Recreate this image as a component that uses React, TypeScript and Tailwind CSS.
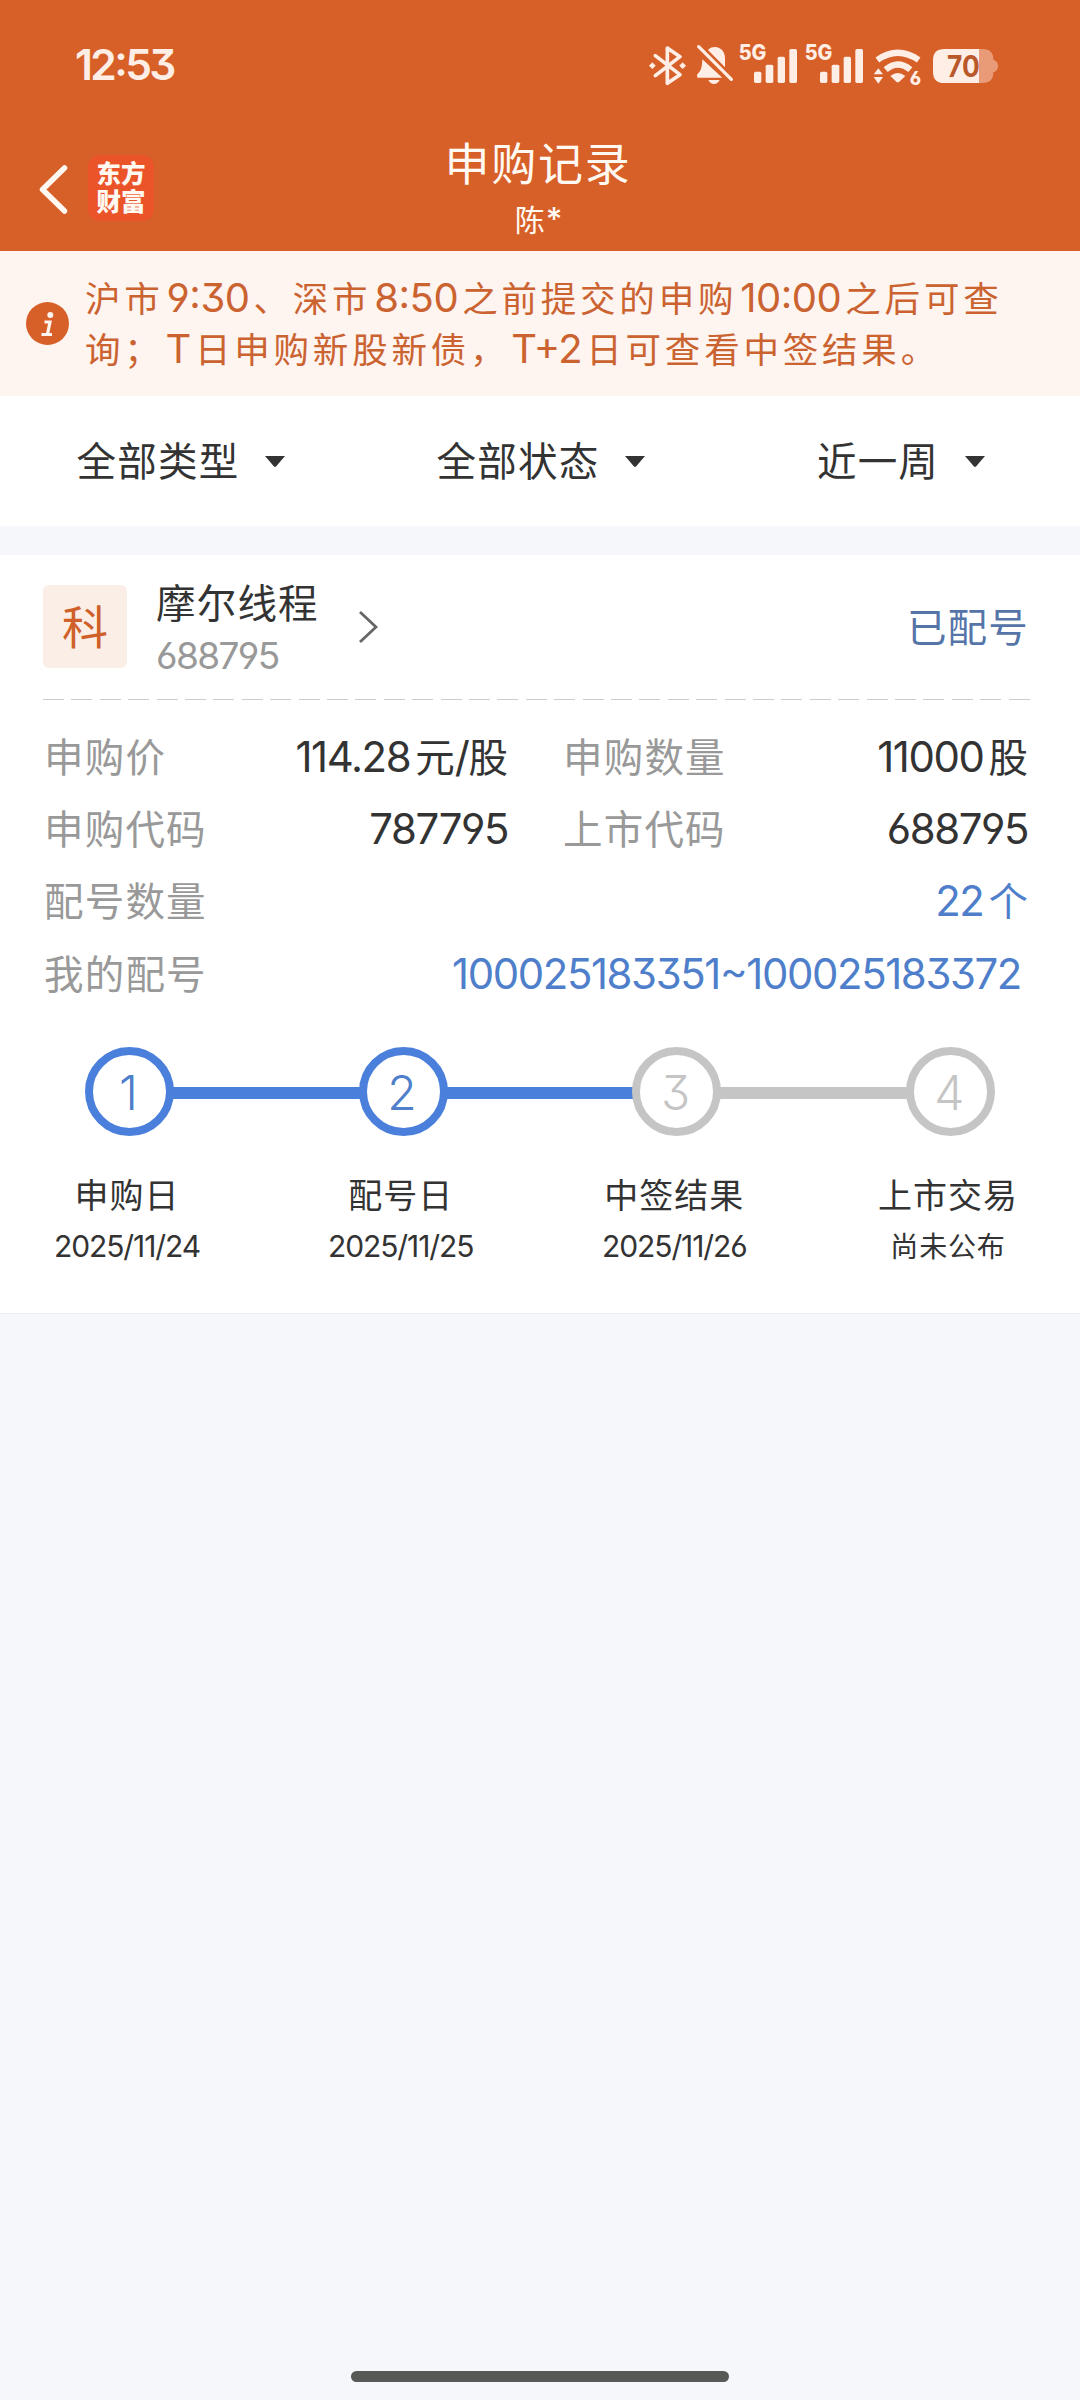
import React from "react";

const CJK = "font-['Noto_Sans_CJK_SC','Liberation_Sans',sans-serif]";
const LATIN =
  "font-['Inter','Noto_Sans_CJK_SC',sans-serif] leading-[0] [font-feature-settings:'cv03','cv04','cv09','calt']";

/** Splits mixed text so digits and letters use the Latin face, set off from the ideographs by a small gap. */
function Mixed({
  text,
  latin = "text-[1.06em] tracking-[-0.033em]",
  before = "ml-[5px]",
  after = "mr-[5px]",
}: {
  text: string;
  latin?: string;
  before?: string;
  after?: string;
}) {
  const parts = text.split(/([\x21-\x7e]+)/).filter(Boolean);
  return (
    <>
      {parts.map((p, i) =>
        /^[\x21-\x7e]/.test(p) ? (
          <span
            key={i}
            className={`${LATIN} ${latin} ${i > 0 && p !== "/" ? before : ""} ${i < parts.length - 1 && p !== "/" ? after : ""}`}
          >
            {p}
          </span>
        ) : (
          <span key={i}>{p}</span>
        )
      )}
    </>
  );
}

function BluetoothIcon() {
  return (
    <svg className="h-12 w-[37px]" viewBox="87 60 111 144" fill="none">
      <path d="M106 104L180 161L142 187V81L180 107L106 164" stroke="#FEEEE6" strokeWidth="11" strokeLinejoin="round" strokeLinecap="round" />
      <path d="M97 125l9 9-9 9-9-9zM188 125l9 9-9 9-9-9z" fill="#FEEEE6" stroke="#FEEEE6" strokeWidth="2" strokeLinejoin="round" />
    </svg>
  );
}

function MutedBellIcon() {
  return (
    <svg className="ml-[10px] h-12 w-[38px]" viewBox="228 60 114 144">
      <path d="M264 87C270 80 278 78 285 78C303 79 315 92 315 112V139Z" fill="#FEEEE6" />
      <path d="M247 115L307 170H233Q229 165 232 160C242 150 246 142 247 115Z" fill="#FEEEE6" />
      <path d="M265 177H299C295 185 289 189 282 189C275 189 269 185 265 177Z" fill="#FEEEE6" />
      <path d="M236 77L334 175" stroke="#FEEEE6" strokeWidth="10" strokeLinecap="round" />
    </svg>
  );
}

function SignalIcon({ className }: { className: string }) {
  return (
    <svg className={`h-12 w-[60px] ${className}`} viewBox="354 60 180 144" fill="#FEEEE6">
      <text x="356" y="118" fontSize="63" fontWeight="800" fontFamily="Inter, sans-serif" textLength="83" lengthAdjust="spacingAndGlyphs">
        5G
      </text>
      <rect x="402" y="152" width="22" height="34" rx="5" />
      <rect x="437" y="131" width="23" height="55" rx="5" />
      <rect x="473" y="107" width="22" height="79" rx="5" />
      <rect x="508" y="84" width="23" height="102" rx="5" />
    </svg>
  );
}

function WifiIcon() {
  return (
    <svg className="ml-[9px] h-12 w-[49px]" viewBox="759 60 147 144" fill="#FEEEE6">
      <g fill="none" stroke="#FEEEE6" strokeWidth="19">
        <path d="M772 117Q833 74 896 117" />
        <path d="M797 146Q833 115 871 146" />
      </g>
      <path d="M811 165Q833 147 856 165L838 182Q833 186 829 182Z" />
      <path d="M775 142L789 160H761Z M761 168H789L775 188Z" />
      <text
        className="[font-feature-settings:'cv03']"
        x="869"
        y="191"
        fontSize="55"
        fontWeight="800"
        fontFamily="Inter, sans-serif"
        textLength="34"
        lengthAdjust="spacingAndGlyphs"
      >
        6
      </text>
    </svg>
  );
}

function BatteryIcon() {
  return (
    <svg className="ml-[11px] h-12 w-[66px]" viewBox="939 60 198 144">
      <path d="M1077 84H1088Q1120 84 1120 116Q1134 120 1134 135Q1134 150 1120 154Q1120 186 1088 186H1077Z" fill="#E99B78" />
      <path d="M1077 84H973Q939 84 939 118V152Q939 186 973 186H1077Z" fill="#FEEEE6" />
      <text x="981" y="167" fontSize="88" fontWeight="700" fontFamily="Inter, sans-serif" fill="#B9592B" textLength="98" lengthAdjust="spacingAndGlyphs">
        70
      </text>
    </svg>
  );
}

function Filter({ label }: { label: string }) {
  return (
    <div className="flex items-center justify-center pl-[2px]">
      <span className="-mt-[5px] text-[39.5px] leading-[48px] tracking-[1.2px]">{label}</span>
      <svg className="ml-[26px] h-[11px] w-5" viewBox="0 0 20 11">
        <path d="M0 0H20L11 10.5Q10 11.4 9 10.5Z" fill="#333" />
      </svg>
    </div>
  );
}

function Field({ label, value, valueClass = "text-[#333]" }: { label: string; value: string; valueClass?: string }) {
  return (
    <div className="flex items-center justify-between">
      <span className="text-[39.5px] leading-[48px] tracking-[1.2px] text-[#999]">{label}</span>
      <span className={`text-[39.5px] leading-[48px] ${valueClass}`}>
        <Mixed text={value} />
      </span>
    </div>
  );
}

const steps = [
  { n: "1", title: "申购日", date: "2025/11/24", done: true },
  { n: "2", title: "配号日", date: "2025/11/25", done: true },
  { n: "3", title: "中签结果", date: "2025/11/26", done: false },
  { n: "4", title: "上市交易", date: "尚未公布", done: false },
];

export default function App() {
  return (
    <div className={`flex h-[2400px] w-[1080px] flex-col bg-[#F6F7FA] text-[#333] ${CJK}`}>
      <header className="h-[251px] shrink-0 bg-[#D75F28]">
        <div className="flex h-[130px] items-center justify-between pr-[81px] pl-[75px]">
          <span className={`text-[42.5px] font-semibold tracking-[-2.600px] text-[#FEEEE6] ${LATIN}`}>12:53</span>
          <div className="flex items-center">
            <BluetoothIcon />
            <MutedBellIcon />
            <SignalIcon className="ml-1" />
            <SignalIcon className="ml-[6px]" />
            <WifiIcon />
            <BatteryIcon />
          </div>
        </div>
        <div className="grid h-[121px] grid-cols-[1fr_auto_1fr] text-[#FFF9F2]">
          <div className="flex items-start pt-[25px] pl-[38px]">
            <svg className="mt-[9px] h-[52px] w-8" viewBox="0 0 32 52" fill="none">
              <path d="M26.5 4L4.500 25.500L26.5 47" stroke="#FFF9F2" strokeWidth="5.500" strokeLinecap="round" strokeLinejoin="round" />
            </svg>
            <div className="ml-[18px] flex h-[66px] w-[66px] items-center justify-center rounded-[12px] bg-[#EB5328] pb-[3px] text-[24.500px] leading-[28px] font-black whitespace-pre-line">
              {"东方\n财富"}
            </div>
          </div>
          <div className="flex flex-col items-center">
            <h1 className="-mt-[1px] -ml-[4px] text-[45px] leading-[66px] tracking-[1.8px]">申购记录</h1>
            <div className="mt-[3px] -ml-[3px] text-[30px] leading-[40px]">
              <Mixed text="陈*" latin="text-[32px] font-medium" before="ml-px" />
            </div>
          </div>
          <div />
        </div>
      </header>

      <section className="flex h-[145px] shrink-0 items-center bg-[#FEF4F0] pl-[26px] text-[#CB6330]">
        <svg className="h-[43px] w-[43px]" viewBox="0 0 43 43">
          <circle cx="21.5" cy="21.5" r="21.5" fill="#D75F28" />
          <circle cx="24.3" cy="13" r="3" fill="#FEF4F0" />
          <path d="M18.5 20H24L21.5 32M15.5 32.5H26" fill="none" stroke="#FEF4F0" strokeWidth="3.2" />
        </svg>
        <div className="-mt-[4px] ml-[16px] text-[35.5px] leading-[51px] tracking-[3.800px] whitespace-nowrap">
          <div>
            <Mixed text="沪市9:30、深市8:50之前提交的申购10:00之后可查" latin="text-[40px] tracking-[-0.5px]" before="ml-[3px]" after="mr-[4px]" />
          </div>
          <div>
            <Mixed text="询；T日申购新股新债，T+2日可查看中签结果。" latin="text-[40px] tracking-[-0.5px]" before="ml-[2px]" after="mr-[4px]" />
          </div>
        </div>
      </section>

      <nav className="grid h-[130px] shrink-0 grid-cols-3 bg-white">
        <Filter label="全部类型" />
        <Filter label="全部状态" />
        <Filter label="近一周" />
      </nav>

      <article className="mt-[29px] h-[759px] shrink-0 border-b border-[#EDEEF1] bg-white pt-[30px]">
        <div className="flex items-center pr-[51px] pl-[43px]">
          <div className="flex h-[83px] w-[84px] items-center justify-center rounded-[6px] bg-[#FBEEE6] pb-[6px] text-[46px] leading-none text-[#CF602A]">科</div>
          <div className="ml-[29px] flex h-[83px] flex-col">
            <span className="-mt-[8px] text-[39.5px] leading-[48px] tracking-[1.2px]">摩尔线程</span>
            <span className={`mt-[31px] text-[37px] tracking-[-1.600px] text-[#999] ${LATIN}`}>688795</span>
          </div>
          <svg className="ml-[38px] h-9 w-6" viewBox="0 0 24 36" fill="none">
            <path d="M3 3L19 18L3 33" stroke="#666" strokeWidth="2.8" />
          </svg>
          <span className="-mt-[3px] ml-auto text-[39.5px] leading-[48px] tracking-[1.2px] text-[#5574A8]">已配号</span>
        </div>

        <div className="mx-[43px] mt-[31px] h-px w-[987px] bg-[repeating-linear-gradient(90deg,#ccc_0px,#ccc_21px,transparent_21px,transparent_28.4px)]" />

        <div className="mt-[19px] mb-px pr-[52px] pl-[44px] [&>div]:h-[72.2px]">
          <div className="grid grid-cols-[464px_465px] justify-between">
            <Field label="申购价" value="114.28元/股" />
            <Field label="申购数量" value="11000股" />
          </div>
          <div className="grid grid-cols-[464px_465px] justify-between">
            <Field label="申购代码" value="787795" />
            <Field label="上市代码" value="688795" />
          </div>
          <Field label="配号数量" value="22个" valueClass="text-[#4F7FCB]" />
          <Field label="我的配号" value="100025183351~100025183372" valueClass="text-[#4F7FCB] pr-[7px]" />
        </div>

        <div className="mt-[39px] flex items-center pl-[85px]">
          {steps.map((s, i) => (
            <React.Fragment key={s.n}>
              {i > 0 && <div className={`-mx-px mt-[3px] h-3 w-[186.6px] ${i < 3 ? "bg-[#4A7FDB]" : "bg-[#C5C5C5]"}`} />}
              <div
                className={`flex h-[89px] w-[89px] shrink-0 items-center justify-center rounded-full border-[8.5px] bg-white pt-[4px] pr-[2px] text-[48px] font-[350] ${LATIN} ${
                  s.done ? "border-[#4A7FDB] text-[#4F7FCB]" : "border-[#C5C5C5] text-[#C5C5C5]"
                }`}
              >
                {s.n}
              </div>
            </React.Fragment>
          ))}
        </div>

        <div className="mt-[34px] flex justify-between pr-[52px] pl-[47px]">
          {steps.map((s) => (
            <div key={s.n} className="flex w-40 flex-col items-center">
              <span className="text-[34px] leading-[48px] tracking-[1px]">{s.title}</span>
              <span className="mt-[3px] text-[28px] leading-[48px] tracking-[0.8px]">
                <Mixed text={s.date} latin="text-[30px] tracking-[-1.100px]" />
              </span>
            </div>
          ))}
        </div>
      </article>

      <div className="mx-auto mt-auto mb-[18px] h-[11px] w-[378px] rounded-full bg-[#575957]" />
    </div>
  );
}
